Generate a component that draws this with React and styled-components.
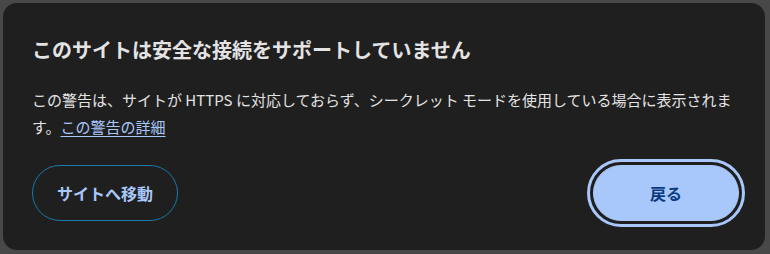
import React from 'react';
import styled, { createGlobalStyle } from 'styled-components';

const GlobalStyle = createGlobalStyle`
  html, body {
    margin: 0;
    padding: 0;
    background: #484848;
  }
  body {
    font-family: "Noto Sans CJK JP", "Noto Sans", sans-serif;
  }
`;

const Dialog = styled.div`
  box-sizing: border-box;
  margin: 3px 5px 0 3px;
  height: 247px;
  padding: 33px 26px 0 29px;
  background: #1f1f1f;
  border-radius: 14px;
  color: #e3e3e3;
  display: flex;
  flex-direction: column;
`;

const Title = styled.h1`
  margin: 0;
  font-size: 20px;
  line-height: 28px;
  font-weight: 700;
  color: #e3e3e3;
`;

const Message = styled.p`
  margin: 22px 0 0;
  font-size: 15px;
  line-height: 27px;
  color: #e3e3e3;
  max-width: 706px;
`;

const Link = styled.a`
  color: #a8c7fa;
  text-decoration: underline;
  text-underline-offset: 3px;
`;

const Actions = styled.div`
  margin-top: 25px;
  display: flex;
  justify-content: space-between;
  align-items: center;
`;

const Button = styled.button`
  box-sizing: border-box;
  width: 146px;
  height: 56px;
  border-radius: 28px;
  font-family: inherit;
  font-size: 16px;
  font-weight: 700;
  cursor: pointer;
  border: 1px solid ${p => (p.$primary ? '#a8c7fa' : '#1779ad')};
  background: ${p => (p.$primary ? '#a8c7fa' : 'transparent')};
  color: ${p => (p.$primary ? '#0a3a82' : '#a8c7fa')};
  outline: ${p => (p.$primary ? '3px solid #a8c7fa' : 'none')};
  outline-offset: 3px;
`;

export default function App() {
  return (
    <>
      <GlobalStyle />
      <Dialog>
        <Title>このサイトは安全な接続をサポートしていません</Title>
        <Message>
          この警告は、サイトが HTTPS に対応しておらず、シークレット モードを使用している場合に表示されます。
          <Link href="#">この警告の詳細</Link>
        </Message>
        <Actions>
          <Button>サイトへ移動</Button>
          <Button $primary>戻る</Button>
        </Actions>
      </Dialog>
    </>
  );
}
